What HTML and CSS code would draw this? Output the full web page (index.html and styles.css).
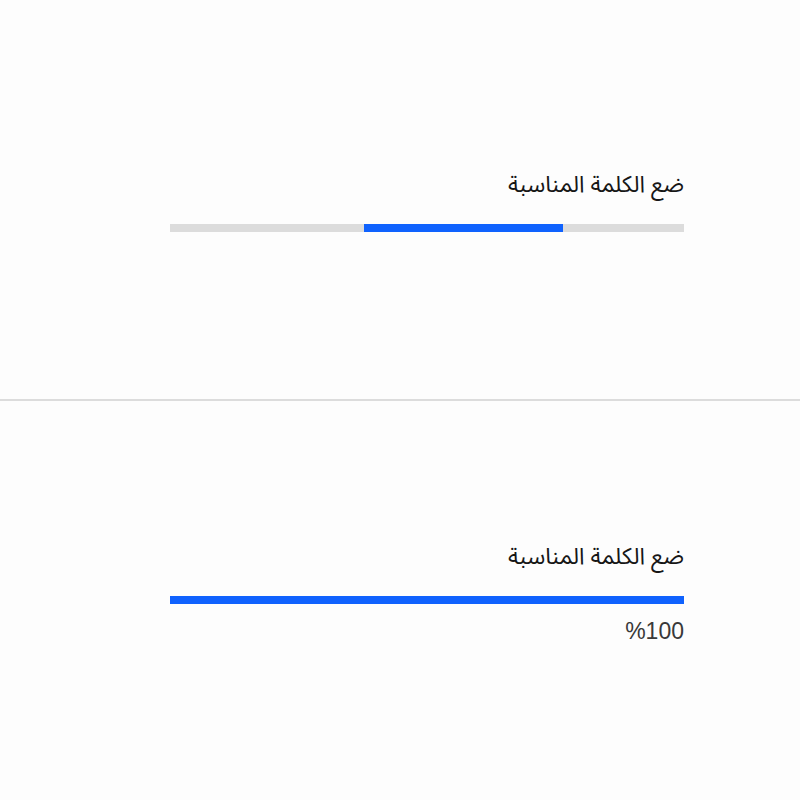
FILE: index.html
```html
<!DOCTYPE html>
<html lang="ar" dir="rtl">
<head>
  <meta charset="UTF-8" />
  <title>Progress Bar</title>
  <meta name="viewport" content="width=device-width, initial-scale=1.0" />
  <link rel="stylesheet" href="styles.css">
</head>
<body>
  <div class="story">
    <div class="progress">
      <div class="progress-label">ضع الكلمة المناسبة</div>
      <div class="progress-track">
        <div class="progress-bar indeterminate"></div>
      </div>
    </div>
  </div>

  <div class="story">
    <div class="progress">
      <div class="progress-label">ضع الكلمة المناسبة</div>
      <div class="progress-track">
        <div class="progress-bar" style="width: 100%"></div>
      </div>
      <div class="progress-helper">%100</div>
    </div>
  </div>
</body>
</html>
```

FILE: styles.css
```css
* {
  box-sizing: border-box;
}

html, body {
  margin: 0;
  padding: 0;
  height: 100%;
  width: 100%;
  background: #fdfdfd;
  font-family: 'Noto Sans Arabic', 'DejaVu Sans', sans-serif;
  color: #161616;
  overflow: hidden;
}

.story {
  height: 400px;
  display: flex;
  align-items: center;
  padding-right: 116px;
  padding-left: 170px;
}

.story:first-child {
  height: 399px;
}

.story + .story {
  border-top: 2px solid #dcdcdc;
  height: 401px;
}

.progress {
  width: 100%;
}

.progress-label {
  font-size: 23px;
  line-height: 36px;
  margin-bottom: 21px;
}

.progress-track {
  height: 8px;
  background: #dcdcdc;
  position: relative;
  overflow: hidden;
}

.progress-bar {
  height: 100%;
  background: #0f62fe;
}

.progress-bar.indeterminate {
  position: absolute;
  top: 0;
  right: 121px;
  width: 199px;
}

.progress-helper {
  font-family: 'Liberation Sans', sans-serif;
  font-size: 23px;
  color: #393939;
  line-height: 28px;
  margin-top: 13px;
  margin-bottom: 17px;
}
```
